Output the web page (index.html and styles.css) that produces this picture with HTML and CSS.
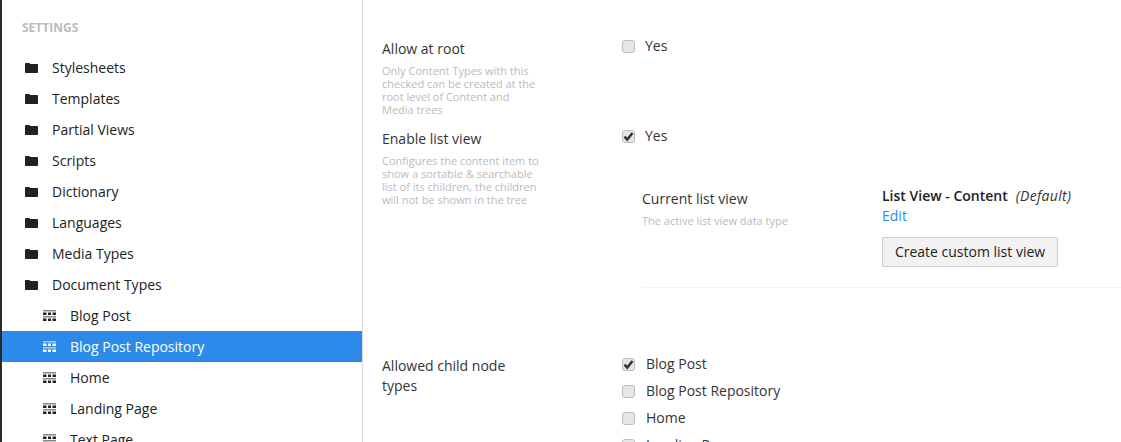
FILE: index.html
```html
<!DOCTYPE html>
<html lang="en">
<head>
<meta charset="utf-8">
<title>Settings</title>
<link rel="stylesheet" href="styles.css">
</head>
<body>
<svg class="sprites" width="0" height="0" aria-hidden="true">
  <symbol id="folder" viewBox="0 0 13 10">
    <path d="M0 1.2C0 .5.4 0 1 0h3.2c.5 0 .7.3.9.8L5.3 1H12c.6 0 1 .4 1 1v7c0 .6-.4 1-1 1H1c-.6 0-1-.4-1-1Z" fill="currentColor"/>
  </symbol>
  <symbol id="grid" viewBox="0 0 13 11">
    <path d="M0 0h13v1.5H0ZM0 6h13v1.5H0Z" fill="currentColor" opacity=".55"/>
    <path d="M0 2.5h3.5v2.5H0ZM5 2.5h3v2.5H5ZM9.5 2.5H13v2.5H9.5ZM0 8.5h3.5V11H0ZM5 8.5h3V11H5ZM9.5 8.5H13V11H9.5Z" fill="currentColor"/>
  </symbol>
  <symbol id="check" viewBox="0 0 12 12">
    <path d="M1.6 6.2 4.6 9.4 10.4 2.2" fill="none" stroke="currentColor" stroke-width="2.7"/>
  </symbol>
</svg>
<div class="app">
  <aside class="sidebar">
    <h5 class="section-title">SETTINGS</h5>
    <ul class="tree">
      <li class="tree-row"><svg class="ico"><use href="#folder"/></svg><span>Stylesheets</span></li>
      <li class="tree-row"><svg class="ico"><use href="#folder"/></svg><span>Templates</span></li>
      <li class="tree-row"><svg class="ico"><use href="#folder"/></svg><span>Partial Views</span></li>
      <li class="tree-row"><svg class="ico"><use href="#folder"/></svg><span>Scripts</span></li>
      <li class="tree-row"><svg class="ico"><use href="#folder"/></svg><span>Dictionary</span></li>
      <li class="tree-row"><svg class="ico"><use href="#folder"/></svg><span>Languages</span></li>
      <li class="tree-row"><svg class="ico"><use href="#folder"/></svg><span>Media Types</span></li>
      <li class="tree-row"><svg class="ico"><use href="#folder"/></svg><span>Document Types</span></li>
      <li class="tree-row child"><svg class="ico"><use href="#grid"/></svg><span>Blog Post</span></li>
      <li class="tree-row child active"><svg class="ico"><use href="#grid"/></svg><span>Blog Post Repository</span></li>
      <li class="tree-row child"><svg class="ico"><use href="#grid"/></svg><span>Home</span></li>
      <li class="tree-row child"><svg class="ico"><use href="#grid"/></svg><span>Landing Page</span></li>
      <li class="tree-row child"><svg class="ico"><use href="#grid"/></svg><span>Text Page</span></li>
    </ul>
  </aside>
  <main class="content">
    <section class="prop prop-root">
      <div class="prop-label">
        <div class="label">Allow at root</div>
        <p class="desc">Only Content Types with this checked can be created at the root level of Content and Media trees</p>
      </div>
      <label class="check-row yes"><span class="box"></span><span>Yes</span></label>
    </section>
    <section class="prop prop-list">
      <div class="prop-label">
        <div class="label">Enable list view</div>
        <p class="desc">Configures the content item to show a sortable &amp; searchable list of its children, the children will not be shown in the tree</p>
      </div>
      <div class="prop-value">
        <label class="check-row yes"><span class="box"><svg class="tick"><use href="#check"/></svg></span><span>Yes</span></label>
        <div class="sub-prop">
          <div class="sub-label">
            <div class="label">Current list view</div>
            <p class="desc">The active list view data type</p>
          </div>
          <div class="sub-value">
            <div class="lv-name"><strong>List View - Content</strong><em>(Default)</em></div>
            <a class="edit" href="#">Edit</a>
            <button class="btn" type="button">Create custom list view</button>
          </div>
        </div>
      </div>
    </section>
    <section class="prop prop-child">
      <div class="prop-label">
        <div class="label">Allowed child node types</div>
      </div>
      <div class="child-list">
        <label class="check-row"><span class="box"><svg class="tick"><use href="#check"/></svg></span><span>Blog Post</span></label>
        <label class="check-row"><span class="box"></span><span>Blog Post Repository</span></label>
        <label class="check-row"><span class="box"></span><span>Home</span></label>
        <label class="check-row"><span class="box"></span><span>Landing Page</span></label>
      </div>
    </section>
  </main>
</div>
</body>
</html>
```
FILE: styles.css
```css
* { box-sizing: border-box; }
html, body { margin: 0; height: 442px; overflow: hidden; background: #fff; }
body { font-family: "Open Sans", sans-serif; font-size: 14px; line-height: 20px; color: #343434; }
.sprites { display: block; width: 0; height: 0; }
.app { display: flex; height: 442px; overflow: hidden; border-left: 2px solid #2a2a2a; }

.sidebar { width: 361px; flex: none; height: 442px; overflow: hidden; border-right: 1px solid #d9d9d9; }
.section-title { margin: 0; padding: 19px 0 0 20px; height: 52px; font-size: 12px; line-height: 18px; font-weight: 700; color: #bbb; }
.tree { list-style: none; margin: 0; padding: 0; }
.tree-row { display: flex; align-items: center; height: 31px; padding-left: 23px; color: #222; }
.tree-row .ico { width: 13px; height: 10px; margin-right: 14px; color: #222; }
.tree-row.child { padding-left: 41px; }
.tree-row.child .ico { height: 11px; }
.tree-row.active { background: #2e8aea; color: #fff; }
.tree-row.active .ico { color: #fff; }

.content { flex: 1; min-width: 0; padding: 37px 0 0 19px; }
.prop { display: grid; grid-template-columns: 240px 1fr; }
.prop-root { height: 90px; }
.prop-child { margin-top: 67px; }
.label { color: #343434; line-height: 20px; }
.prop-label { width: 160px; padding-top: 2px; }
.prop-child .prop-label { padding-top: 1px; }
.desc { margin: 5px 0 0; font-size: 11px; line-height: 13px; color: #bbb; }

.check-row { display: flex; align-items: center; height: 18px; color: #343434; }
.box { width: 13px; height: 13px; margin-right: 11px; flex: none; display: flex; align-items: center; justify-content: center; background: #e6e6e6; border: 1px solid #bdbdbd; border-radius: 3px; color: #333; }
.tick { width: 11px; height: 11px; }
.yes .box { margin-right: 10px; }

.sub-prop { display: grid; grid-template-columns: 240px 1fr; margin: 34px 0 0 20px; height: 109px; border-bottom: 1px solid #f2f2f2; }
.sub-label .label { padding-top: 10px; }
.sub-label .desc { margin-top: 5px; }
.lv-name { margin-top: 7px; }
.lv-name strong { font-weight: 600; color: #222; margin-right: 8px; }
.lv-name em { color: #333; letter-spacing: .3px; }
.edit { display: block; color: #2e8aea; text-decoration: none; }
.btn { display: block; margin-top: 11px; width: 176px; height: 30px; padding: 0; font: inherit; color: #222; background: #f2f2f2; border: 1px solid #ccc; border-radius: 2px; }

.child-list { display: flex; flex-direction: column; gap: 9px; }
```
